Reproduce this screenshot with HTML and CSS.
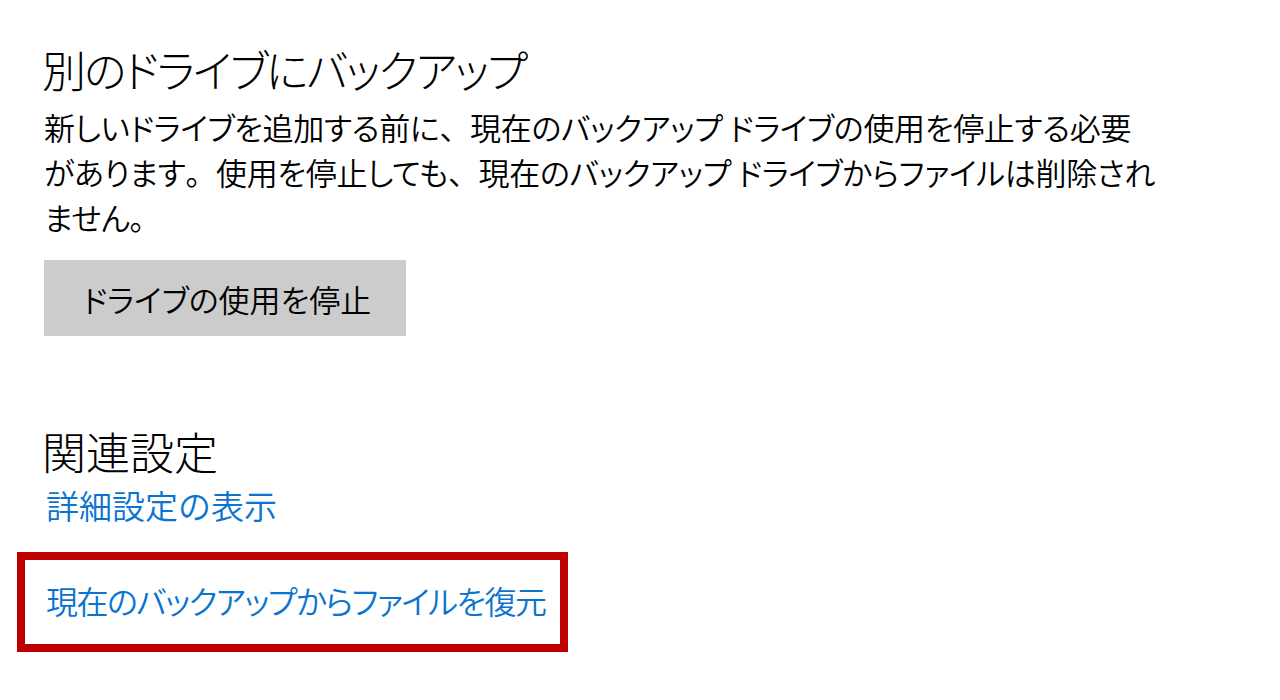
FILE: index.html
```html
<!DOCTYPE html>
<html lang="ja">
<head>
<meta charset="utf-8">
<link rel="stylesheet" href="styles.css">
</head>
<body>
<main class="page">
  <section class="section">
    <h1 class="title title-main">別のドライブにバックアップ</h1>
    <p class="desc">新しいドライブを追加する前に<span class="punc">、</span>現在のバックアップ ドライブの使用を停止する必要<br>があります<span class="punc">。</span>使用を停止しても<span class="punc">、</span>現在のバックアップ ドライブからファイルは削除され<br>ません<span class="punc">。</span></p>
    <button class="btn">ドライブの使用を停止</button>
  </section>
  <section class="section related">
    <h2 class="title">関連設定</h2>
    <a class="link link-detail" href="#">詳細設定の表示</a>
  </section>
  <div class="box">
    <a class="link link-restore" href="#">現在のバックアップからファイルを復元</a>
  </div>
</main>
</body>
</html>
```
FILE: styles.css
```css
html, body {
  margin: 0;
  padding: 0;
  background: #ffffff;
}
body {
  font-family: "Noto Sans CJK JP", "Noto Sans", sans-serif;
  color: #000000;
  font-feature-settings: "palt";
}
.page {
  padding-top: 39px;
  display: flex;
  flex-direction: column;
  align-items: flex-start;
}
.section {
  padding-left: 42px;
  display: flex;
  flex-direction: column;
  align-items: flex-start;
}
.title {
  margin: 0;
  font-size: 44px;
  line-height: 60px;
  font-weight: 300;
}
.title-main {
  letter-spacing: -2.1px;
}
.desc {
  margin: 5px 0 0 2px;
  font-size: 31px;
  line-height: 45px;
  font-weight: 350;
  white-space: nowrap;
  letter-spacing: -0.3px;
}
.punc {
  font-feature-settings: normal;
}
.btn {
  margin: 21px 0 0 2px;
  width: 362px;
  height: 76px;
  border: 0;
  background: #cccccc;
  color: #000;
  font-family: inherit;
  font-feature-settings: "palt";
  font-size: 31px;
  font-weight: 350;
  padding: 0 0 0 4px;
}
.related {
  margin-top: 85px;
}
.link {
  display: block;
  font-size: 32px;
  line-height: 45px;
  font-weight: 350;
  color: #0a74d0;
  text-decoration: none;
}
.link-detail {
  margin: 2px 0 0 4px;
  font-size: 33px;
  font-feature-settings: normal;
}
.box {
  margin: 24px 0 0 17px;
  width: 514px;
  border: 8px solid #c00000;
  padding: 18px 0 21px 21px;
}
.link-restore {
  letter-spacing: -1.5px;
  white-space: nowrap;
}
```
